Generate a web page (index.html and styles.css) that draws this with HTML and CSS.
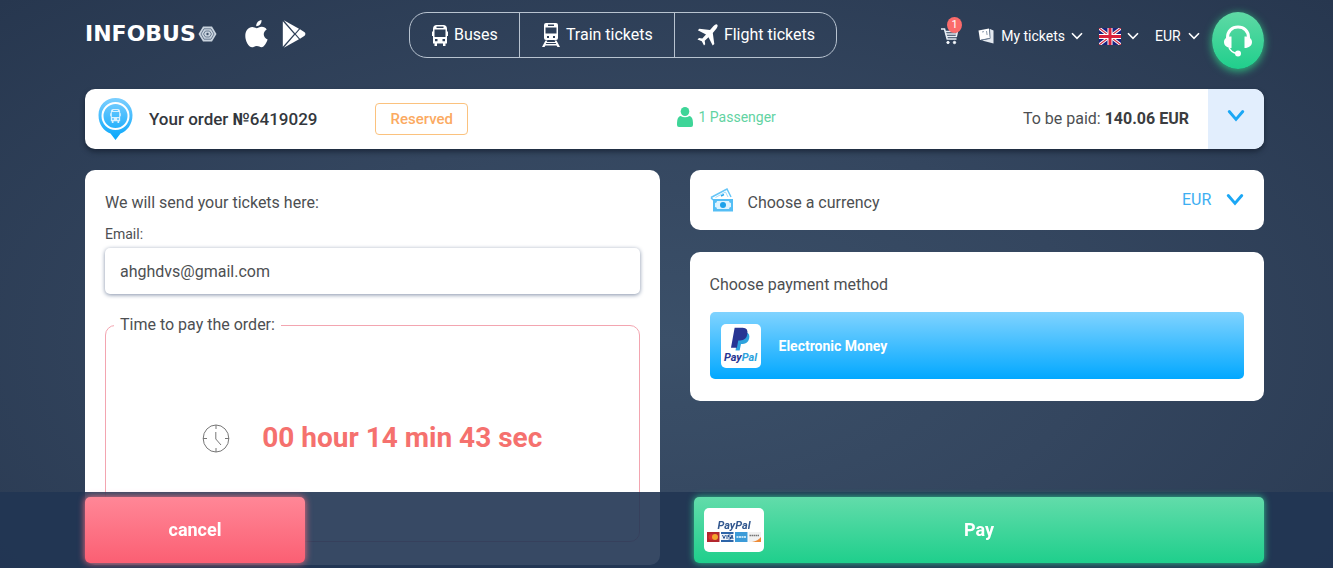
FILE: index.html
```
<!DOCTYPE html>
<html lang="en">
<head>
  <meta charset="UTF-8">
  <meta name="viewport" content="width=device-width, initial-scale=1.0">
  <title>Infobus - Payment</title>
  <link rel="stylesheet" href="styles.css">
</head>
<body>
  <!-- Shared icons -->
  <svg class="sprite" aria-hidden="true">
    <symbol id="chevron" viewBox="0 0 12 8">
      <path d="M1 1.2l5 5.2 5-5.2" fill="none" stroke="currentColor" stroke-width="1.6"/>
    </symbol>
    <symbol id="chevron-bold" viewBox="0 0 16 12">
      <path d="M2 2l6 7 6-7" fill="none" stroke="currentColor" stroke-width="2.6" stroke-linecap="round"/>
    </symbol>
    <symbol id="bus" viewBox="0 0 16 21">
      <path fill="currentColor" fill-rule="evenodd" d="M4 0h8q3 .5 3 4v2.500h1V11h-1v7.500h-1.500V21H11v-2.500H5V21H2.500v-2.500H1V11H0V6.500h1V4q0-3.500 3-4zM4.500 1.500V3h7V1.500zM2.500 4.500V12h11V4.500zM3 14v2.200h2.500V14zm7.500 0v2.200H13V14z"/>
    </symbol>
  </svg>

  <header class="header">
    <div class="brand">
      <a href="#" class="logo">INFOBUS
        <svg width="19" height="16" viewBox="0 0 19 16">
          <path d="M5 .5h9l4.500 7.500-4.500 7.500H5L.5 8z" fill="#c9d3de"/>
          <g fill="none" stroke="#6b7c92">
            <path d="M6 2.800h7L16 8l-3 5.200H6L3 8z"/>
            <path d="M7.500 5h4l2 3-2 3h-4l-2-3z"/>
          </g>
          <circle cx="9.500" cy="8" r="1.200" fill="#44566e"/>
        </svg>
      </a>
      <a href="#" class="store" aria-label="App Store">
        <svg width="23" height="28" viewBox="0 0 23 28" fill="#fff">
          <path d="M16.500 0c.3 3.500-2.200 6.200-5.300 6.200C11 3 13.500.4 16.500 0z"/>
          <path d="M11.500 8.200c1.500 0 2.700-1.400 5.200-1.400 2.300 0 4 1.100 5 2.700-4.300 2.500-3.800 8.200.9 10-1 3.200-3.400 7.700-6 7.700-1.900 0-2.600-1.100-4.800-1.100s-3 1.100-4.700 1.100C3.500 27.200.3 21 .3 16c0-5.500 3.200-9 7-9 2 0 3.200 1.200 4.200 1.200z"/>
        </svg>
      </a>
      <a href="#" class="store" aria-label="Google Play">
        <svg width="24" height="28" viewBox="0 0 24 28" fill="#fff">
          <path d="M.8 1.200L12 14 .8 26.800z"/>
          <path d="M1.800 .3L17 8.800 13 13.200z"/>
          <path d="M1.800 27.700L17 19.200 13 14.800z"/>
          <path d="M18 9.300l4.600 3q1.500 1.700 0 3.400L18 18.700 13.800 14z"/>
        </svg>
      </a>
    </div>

    <nav class="transport">
      <a href="#">
        <svg width="16" height="21"><use href="#bus"/></svg>
        Buses
      </a>
      <a href="#">
        <svg width="18" height="24" viewBox="0 0 18 24" fill="currentColor">
          <path fill-rule="evenodd" d="M4 0h10q2 0 2 2v13q0 2-2 2H4q-2 0-2-2V2q0-2 2-2zm2 1.500V3h6V1.500zM3.500 4.500v6h11v-6zM5 13v2h2v-2zm6 0v2h2v-2z"/>
          <path d="M3.500 17.500h2l-.8 1.500h8.600l-.8-1.500h2L18 24h-2.500l-1-1.500h-11L2.500 24H0zM4.300 20l-.5 1h10.400l-.5-1z"/>
        </svg>
        Train tickets
      </a>
      <a href="#">
        <svg width="21" height="22" viewBox="0 0 21 22" fill="currentColor">
          <path d="M20 .5q1.500 1.200-.5 4L15.800 9l1.500 11-1.600 1.500-4.200-8.300-3.800 3.600.5 3.400L7 21.500 4.800 17.200.5 15.500 2 14.100l3.300.3L9 10.500.8 6.300 2.300 4.800l10.700 1.300L16.500 2Q18.800-.3 20 .5z"/>
        </svg>
        Flight tickets
      </a>
    </nav>

    <div class="tools">
      <a href="#" class="cart" aria-label="Cart">
        <svg width="18" height="18" viewBox="0 0 18 18" fill="none" stroke="#e8eef5">
          <path d="M0 2h3.500l2.700 10h9.300" stroke-width="1.600"/>
          <path d="M4 4.500h12.500M4.500 7H16M5.300 9.500h10" stroke-width="1.600"/>
          <path d="M16.500 4l-1.300 6" stroke-width="1.500"/>
          <circle cx="7" cy="15.500" r="1.200" fill="#fff"/>
          <circle cx="13.500" cy="15.500" r="1.200" fill="#fff"/>
        </svg>
        <span class="cart-count">1</span>
      </a>
      <button type="button" class="menu my-tickets">
        <svg width="17" height="18" viewBox="0 0 17 18">
          <path d="M.5 3.500L11 1.500l1 9.500L2 13z" fill="#fff"/>
          <path d="M12 2l3.500 1.500v13L4 13.500l8-2z" fill="#e3e9f0"/>
          <path d="M4 5l2-.4M8.500 4l.6 4M11.500 2l.8 9.500M3 13l9-1.500" fill="none" stroke="#6f8198" stroke-width=".8"/>
        </svg>
        <span>My tickets</span>
        <svg width="12" height="8"><use href="#chevron"/></svg>
      </button>
      <button type="button" class="menu" aria-label="Language">
        <svg width="22" height="17" viewBox="0 0 22 17">
          <path fill="#1a237e" d="M0 0h22v17H0z"/>
          <path d="M0 0l22 17M22 0L0 17" stroke="#fff" stroke-width="3"/>
          <path d="M0 0l22 17M22 0L0 17" stroke="#d32f45" stroke-width="1.200"/>
          <path d="M11 0v17M0 8.500h22" stroke="#fff" stroke-width="5"/>
          <path d="M11 0v17M0 8.500h22" stroke="#d8203c" stroke-width="3"/>
        </svg>
        <svg width="12" height="8"><use href="#chevron"/></svg>
      </button>
      <div class="menu">
        <select class="header-currency" aria-label="Currency">
          <option>EUR</option>
          <option>USD</option>
        </select>
        <svg width="12" height="8"><use href="#chevron"/></svg>
      </div>
      <button type="button" class="support" aria-label="Support">
        <svg width="30" height="32" viewBox="0 0 30 32">
          <path d="M4.500 15v-2.500C4.500 6 9 2 15 2s10.500 4 10.500 10.500V15" fill="none" stroke="#fff" stroke-width="3"/>
          <path d="M8.500 11.500v11.500C4 23 1 20.500 1 17s3-5.500 7.500-5.500zM21.500 11.500v11.500c4.500 0 7.500-2.500 7.500-6s-3-5.500-7.500-5.500z" fill="#fff"/>
          <path d="M6 22.500q2 5 8 6" fill="none" stroke="#fff" stroke-width="1.500"/>
          <circle cx="15" cy="28.500" r="3" fill="#fff"/>
        </svg>
      </button>
    </div>
  </header>

  <main class="page">
    <section class="order">
      <div class="order-info">
        <svg width="35" height="42" viewBox="0 0 35 42">
          <defs>
            <linearGradient id="pin" x1="0" y1="0" x2="0" y2="1">
              <stop offset="0" stop-color="#7ccfff"/>
              <stop offset="1" stop-color="#06a6fb"/>
            </linearGradient>
          </defs>
          <path d="M17.500 0C27 0 34.500 7.500 34.500 17S29 33 22.500 35.500L17.500 42l-5-6.500C6 33 .5 27 .5 17S8 0 17.500 0z" fill="url(#pin)"/>
          <circle cx="17.500" cy="18" r="13" fill="none" stroke="#fff" stroke-width="2"/>
          <svg x="12" y="11" width="11" height="14" color="#d9f1ff"><use href="#bus"/></svg>
        </svg>
        <h1>Your order <b>№</b>6419029</h1>
        <span class="status">Reserved</span>
      </div>
      <div class="passengers">
        <svg width="16" height="20" viewBox="0 0 16 20" fill="#3ed598">
          <ellipse cx="8" cy="4.500" rx="4.300" ry="4.500"/>
          <path d="M3.500 9q4.500 2.500 9 0Q16 10 16 16v2q0 2-2 2H2q-2 0-2-2v-2q0-6 3.500-7z"/>
        </svg>
        1 Passenger
      </div>
      <div class="total">To be paid: <b>140.06 EUR</b></div>
      <button type="button" class="expand" aria-label="Show order details">
        <svg width="18" height="14"><use href="#chevron-bold"/></svg>
      </button>
    </section>

    <div class="columns">
      <section class="card contact">
        <h2>We will send your tickets here:</h2>
        <label for="email">Email:</label>
        <input type="email" id="email" value="ahghdvs@gmail.com">
        <fieldset class="timer">
          <legend>Time to pay the order:</legend>
          <div class="countdown">
            <svg width="28" height="29" viewBox="0 0 28 29" fill="none" stroke="#777">
              <ellipse cx="14" cy="14.500" rx="12.800" ry="13.500"/>
              <path d="M14 1v4M14 24v4M1 14.500h4M23 14.500h4M13.800 8v7l5.200 6"/>
            </svg>
            <strong>00 hour 14 min 43 sec</strong>
          </div>
        </fieldset>
      </section>

      <div class="side">
        <section class="card currency">
          <svg width="24" height="24" viewBox="0 0 24 24">
            <path d="M1 9.500L17 1l4 8M1 9.500L3 12" fill="none" stroke="#65c5f7" stroke-width="1.500"/>
            <path d="M5.500 9.500L15.500 4l2.500 5" fill="none" stroke="#9fdcfb" stroke-width="1"/>
            <path d="M11 8l3-1.500" stroke="#29a9ee" stroke-width="1.500"/>
            <path d="M3 11h20v12.500H3z" fill="#55bef5"/>
            <path d="M7 13h12q0 2 2 2v4q-2 0-2 2H7q0-2-2-2v-4q2 0 2-2z" fill="#dff4ff"/>
            <circle cx="13" cy="17" r="3" fill="#1da1ea"/>
          </svg>
          <label for="currency">Choose a currency</label>
          <select id="currency">
            <option>EUR</option>
            <option>USD</option>
          </select>
          <svg class="arrow" width="18" height="14"><use href="#chevron-bold"/></svg>
        </section>

        <section class="card payment">
          <h2>Choose payment method</h2>
          <button type="button" class="method">
            <span class="paypal">
              <svg width="20" height="25" viewBox="0 0 22 26">
                <path d="M8 5h9q4 1.500 3 7-1.500 6-7 6h-2l-1.500 7H5z" fill="#2ea3dd"/>
                <path d="M4 0h9q6 0 5 7-1 7-8 7H8l-1.500 8H0z" fill="#283593"/>
              </svg>
              <span class="paypal-name">Pay<i>Pal</i></span>
            </span>
            Electronic Money
          </button>
        </section>
      </div>
    </div>
  </main>

  <!-- Sticky actions -->
  <footer class="actions">
    <button type="button" class="cancel">cancel</button>
    <button type="button" class="pay">
      <span class="cards">
        <span class="cards-name">PayPal</span>
        <svg width="54" height="10" viewBox="0 0 54 10">
          <path fill="#b3262d" d="M0 0h12.500v10H0z"/>
          <circle cx="4.500" cy="5" r="3" fill="#d9322e"/>
          <circle cx="8" cy="5" r="3" fill="#f3a32d"/>
          <path fill="#eef3f9" d="M14 0h12.500v10H14z"/>
          <path fill="#2c64a8" d="M14 0h12.500v2H14zM14 8h12.500v2H14z"/>
          <path d="M15.500 3l1.500 3.500L18.500 3M20 3v4M23.500 3h-2v2h2v2h-2M24 7l1-4 1 4" fill="none" stroke="#24508e"/>
          <path fill="#3c9bd8" d="M28 0h12.500v10H28z"/>
          <path d="M29.500 5h9.500" stroke="#bfe2f6" stroke-width="2" stroke-dasharray="2 .5"/>
          <path fill="#f1f1f1" d="M41.500 0H54v10H41.500z"/>
          <path d="M42.500 3.500h10" stroke="#777" stroke-width="1.500" stroke-dasharray="1.500 .5"/>
          <path fill="#ee8a35" d="M45 10q6-1 9-5v5z"/>
        </svg>
      </span>
      <span>Pay</span>
    </button>
  </footer>
</body>
</html>
```
FILE: styles.css
```
* {
  box-sizing: border-box;
}
body {
  margin: 0;
  min-height: 100vh;
  font-family: Roboto, 'Noto Sans', sans-serif;
  font-size: 16px;
  line-height: 20px;
  color: #4d4f52;
  background: radial-gradient(ellipse at 50% 60%, #3b5069 0%, #34465f 45%, #27374f 100%);
}
a {
  color: inherit;
  text-decoration: none;
}
button,
select,
input {
  font: inherit;
  color: inherit;
  border: none;
  background: none;
  padding: 0;
  margin: 0;
}
button,
select {
  cursor: pointer;
}
select {
  appearance: none;
}
h1,
h2 {
  margin: 0;
  font-size: 16px;
  font-weight: 400;
}
svg {
  flex: none;
}
.sprite {
  position: absolute;
  width: 0;
  height: 0;
}

/* Header */
.header {
  display: flex;
  justify-content: space-between;
  align-items: flex-start;
  padding: 12px 69px 0 85px;
  color: #fff;
}
.brand {
  display: flex;
  align-items: center;
  height: 44px;
}
.logo {
  display: flex;
  align-items: center;
  gap: 2px;
  margin-right: 28px;
  font-family: 'DejaVu Sans', sans-serif;
  font-size: 22px;
  font-weight: 700;
}
.store {
  display: flex;
  margin-right: 14px;
}
.store:last-child {
  margin-right: 0;
}
.transport {
  display: flex;
  width: 428px;
  height: 46px;
  border: 1px solid #b8c3d0;
  border-radius: 18px;
}
.transport a {
  display: flex;
  flex: 1 1 auto;
  align-items: center;
  justify-content: center;
  gap: 6px;
}
.transport a + a {
  border-left: 1px solid #b8c3d0;
}
.tools {
  display: flex;
  gap: 16px;
  font-size: 14px;
}
.cart {
  position: relative;
  display: flex;
  align-items: center;
  height: 48px;
  margin-right: 3px;
}
.cart-count {
  position: absolute;
  left: 6px;
  top: 5px;
  width: 15px;
  height: 16px;
  border-radius: 50%;
  background: #fb6b6b;
  font-size: 11px;
  line-height: 16px;
  text-align: center;
}
.menu {
  display: flex;
  align-items: center;
  gap: 6px;
  height: 48px;
}
.header-currency {
  width: 27px;
}
.support {
  display: flex;
  align-items: center;
  justify-content: center;
  width: 52px;
  height: 57px;
  margin-left: -4px;
  border-radius: 50%;
  background: linear-gradient(#5fd9a5, #20cf8c);
  box-shadow: 0 2px 8px #2fbf7e;
}

/* Order summary */
.page {
  padding: 20px 69px 3px 85px;
}
.order {
  display: grid;
  grid-template-columns: 50% 1fr auto 56px;
  align-items: center;
  height: 60px;
  margin-bottom: 21px;
  border-radius: 10px;
  overflow: hidden;
  background: #fff;
  box-shadow: 0 3px 5px rgba(15, 25, 40, 0.6);
}
.order-info {
  display: flex;
  align-items: center;
  padding-left: 13px;
}
.order-info h1 {
  margin: 0 58px 0 16px;
  font-size: 17px;
  font-weight: 500;
  color: #33373d;
}
.status {
  padding: 5px 14px;
  border: 1px solid #fbc27e;
  border-radius: 4px;
  font-size: 15px;
  font-weight: 500;
  color: #fbaa62;
}
.passengers {
  display: flex;
  align-items: center;
  gap: 6px;
  padding: 0 0 4px 2px;
  font-size: 14px;
  color: #62d3a2;
}
.total {
  padding-right: 19px;
}
.total b {
  font-weight: 700;
  color: #3b3d40;
}
.expand {
  display: flex;
  align-items: center;
  justify-content: center;
  height: 60px;
  padding-bottom: 6px;
  background: #e2eefd;
  color: #1ba7f5;
}

/* Cards */
.columns {
  display: grid;
  grid-template-columns: 1fr 1fr;
  align-items: start;
  gap: 30px;
}
.card {
  border-radius: 10px;
  background: #fff;
}
.contact {
  padding: 23px 20px;
}
.contact label {
  display: block;
  margin: 11px 0 4px;
  font-size: 14px;
}
.contact input {
  display: block;
  width: 100%;
  height: 46px;
  padding: 0 15px;
  border-radius: 5px;
  box-shadow: 0 1px 4px #8390a8;
}
.timer {
  margin: 21px 0 0;
  padding: 0;
  border: 1px solid #f3a5b0;
  border-radius: 10px;
}
.timer legend {
  margin-left: 8px;
  padding: 0 6px;
}
.countdown {
  display: flex;
  align-items: center;
  justify-content: center;
  gap: 32px;
  height: 206px;
}
.countdown strong {
  font-size: 28px;
  line-height: 32px;
  font-weight: 700;
  color: #f5716e;
}
.side {
  display: grid;
  gap: 22px;
}
.currency {
  display: flex;
  align-items: center;
  height: 60px;
  padding: 0 20px;
}
.currency label {
  flex: 1;
  padding: 6px 0 0 14px;
}
.currency select {
  width: 44px;
  color: #3daef2;
}
.arrow {
  color: #1ba7f5;
}
.payment {
  padding: 23px 20px 22px;
}
.method {
  display: flex;
  align-items: center;
  gap: 18px;
  width: 100%;
  height: 67px;
  margin-top: 17px;
  padding: 0 11px;
  border-radius: 5px;
  background: linear-gradient(#80d3ff, #02a8ff);
  font-size: 14px;
  font-weight: 700;
  color: #fff;
}
.paypal {
  display: flex;
  flex-direction: column;
  align-items: center;
  justify-content: center;
  width: 40px;
  height: 44px;
  border-radius: 5px;
  background: #fff;
}
.paypal-name {
  font-size: 11px;
  line-height: 12px;
  font-style: italic;
  color: #283593;
}
.paypal-name i {
  color: #2ea3dd;
}

/* Bottom bar */
.actions {
  position: fixed;
  left: 0;
  right: 0;
  bottom: 0;
  display: flex;
  justify-content: space-between;
  padding: 5px 69px 5px 85px;
  background: rgba(33, 53, 83, 0.9);
}
.actions button {
  height: 66px;
  border-radius: 5px;
  font-size: 18px;
  font-weight: 700;
  color: #fff;
}
.cancel {
  width: 220px;
  background: linear-gradient(#ff8797, #fb5f73);
  box-shadow: 0 0 7px #f96f80;
}
.pay {
  display: grid;
  grid-template-columns: 60px 1fr 60px;
  align-items: center;
  width: 570px;
  padding: 0 10px;
  background: linear-gradient(#62dcaa, #1fcf8c);
  box-shadow: 0 0 7px #2fca8e;
}
.cards {
  display: flex;
  flex-direction: column;
  align-items: center;
  justify-content: center;
  height: 44px;
  border-radius: 5px;
  background: #fff;
}
.cards-name {
  font-size: 11px;
  line-height: 13px;
  font-style: italic;
  color: #33588f;
}
```
